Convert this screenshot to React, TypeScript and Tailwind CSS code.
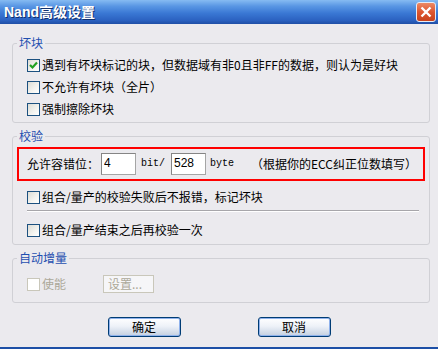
import type { ReactNode } from "react";

const cjk = { fontFamily: '"SimSun", "Noto Sans CJK SC", sans-serif' };

function Check({ checked = false, disabled = false }: { checked?: boolean; disabled?: boolean }) {
  return (
    <span
      className={`flex w-[13px] h-[13px] shrink-0 items-center justify-center border ${
        disabled
          ? "border-[#c9c7ba] bg-white"
          : "border-[#1c5180] bg-[linear-gradient(135deg,#dcdcd5_0%,#f4f4f0_60%,#ffffff_100%)]"
      }`}
    >
      {checked && (
        <svg width="11" height="11" viewBox="0 0 11 11">
          <path d="M2 5 L4.5 7.5 L9 2.5" fill="none" stroke="#21a121" strokeWidth="2.2" />
        </svg>
      )}
    </span>
  );
}

function Row({ children, checked, disabled }: { children: ReactNode; checked?: boolean; disabled?: boolean }) {
  return (
    <div className="flex h-[22px] items-center gap-[2px] pl-[14px]">
      <Check checked={checked} disabled={disabled} />
      <span className={disabled ? "text-[#aca899]" : "text-black"}>{children}</span>
    </div>
  );
}

function Group({ title, className, children }: { title: string; className: string; children: ReactNode }) {
  return (
    <fieldset className={`ml-[12px] w-[418px] rounded-[3px] border border-[#d0d0d5] ${className}`}>
      <legend className="ml-[4px] px-[2px] leading-[14px] text-[#1f4fb0]">{title}</legend>
      {children}
    </fieldset>
  );
}

function Btn({ label }: { label: string }) {
  return (
    <button
      type="button"
      className="flex h-[20px] w-[73px] items-center justify-center rounded-[3px] border border-[#003c74] bg-[linear-gradient(#ffffff_0%,#eef2f8_45%,#c3cfe0_100%)] text-black shadow-[inset_0_0_0_1px_#8fb2ec] leading-[14px]"
    >
      {label}
    </button>
  );
}

export default function App() {
  return (
    <div className="flex h-[349px] w-[438px] flex-col bg-[#ebeaee] text-[12px] leading-[14px]" style={cjk}>
      <div className="flex h-[24px] shrink-0 items-center justify-between bg-[linear-gradient(#86bbf2_0%,#5a97e4_25%,#3a78d4_55%,#2b61c0_85%,#1f4ea6_100%)] pl-[4px] pr-[2px]">
        <span
          className="text-[14px] font-bold leading-[16px] text-white [text-shadow:1px_1px_0_#10306e]"
          style={{ fontFamily: '"Liberation Sans", "Noto Sans CJK SC", sans-serif' }}
        >
          Nand高级设置
        </span>
        <span className="flex h-[20px] w-[20px] items-center justify-center rounded-[3px] border border-[#e6ecf6] bg-[linear-gradient(#ec8a66_0%,#dd5630_50%,#c8421c_100%)]">
          <svg width="12" height="12" viewBox="0 0 12 12">
            <path d="M1.5 1.5 L10.5 10.5 M10.5 1.5 L1.5 10.5" stroke="white" strokeWidth="2.4" />
          </svg>
        </span>
      </div>

      <Group title="坏块" className="mt-[12px] pt-[4px] pb-[2px]">
        <Row checked>遇到有坏块标记的块，但数据域有非0且非FF的数据，则认为是好块</Row>
        <Row>不允许有坏块（全片）</Row>
        <Row>强制擦除坏块</Row>
      </Group>

      <Group title="校验" className="mt-[6px] pt-[4px] pb-[3px]">
        <div className="mx-[4px] flex h-[34px] items-center border-2 border-[#ff0000] pl-[8px]">
          <span>允许容错位：</span>
          <input
            readOnly
            value="4"
            className="ml-[2px] h-[22px] w-[35px] border border-[#a5a5a5] border-t-[#858585] border-l-[#858585] bg-white pb-[3px] pl-[2px] text-[12px] outline-none"
            style={{ fontFamily: '"Liberation Sans", sans-serif' }}
          />
          <span className="ml-[5px] w-[30px] text-[10px]" style={{ fontFamily: '"Liberation Mono", monospace' }}>
            bit/
          </span>
          <input
            readOnly
            value="528"
            className="h-[22px] w-[35px] border border-[#a5a5a5] border-t-[#858585] border-l-[#858585] bg-white pb-[3px] pl-[2px] text-[12px] outline-none"
            style={{ fontFamily: '"Liberation Sans", sans-serif' }}
          />
          <span className="ml-[4px] w-[41px] text-[10px]" style={{ fontFamily: '"Liberation Mono", monospace' }}>
            byte
          </span>
          <span>（根据你的ECC纠正位数填写）</span>
        </div>
        <div className="mt-[5px]">
          <Row>组合/量产的校验失败后不报错，标记坏块</Row>
        </div>
        <div className="ml-[14px] mr-[10px] mt-[2px] h-[2px] border-t border-b border-t-[#a7a6aa] border-b-white" />
        <div className="mt-[7px]">
          <Row>组合/量产结束之后再校验一次</Row>
        </div>
      </Group>

      <Group title="自动增量" className="mt-[6px] pt-[8px] pb-[7px]">
        <div className="flex h-[22px] items-center">
          <div className="w-[90px]">
            <Row disabled>使能</Row>
          </div>
          <span className="flex h-[18px] w-[51px] items-center border border-[#c9c7ba] bg-[#f6f6f8] pl-[4px] text-[#aca899]">
            设置...
          </span>
        </div>
      </Group>

      <div className="mt-[14px] flex justify-center gap-[77px]">
        <Btn label="确定" />
        <Btn label="取消" />
      </div>

      <div className="flex-1" />
      <div className="h-[2px] shrink-0 bg-[#1d4fa6]" />
    </div>
  );
}
